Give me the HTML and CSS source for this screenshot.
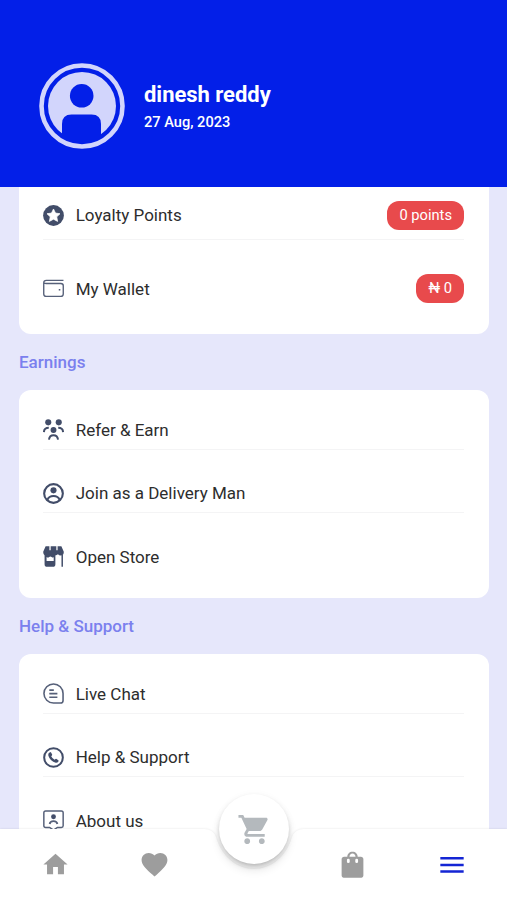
FILE: index.html
```html
<!DOCTYPE html>
<html lang="en">
<head>
<meta charset="utf-8">
<title>Menu</title>
<link rel="stylesheet" href="styles.css">
</head>
<body>
<div class="app">
  <header class="profile">
    <svg class="avatar" viewBox="0 0 86 86">
      <circle cx="43" cy="43" r="40.5" fill="none" stroke="#d2d5fc" stroke-width="4.600"/>
      <circle cx="43" cy="43" r="34" fill="#d2d5fc"/>
      <circle cx="42.700" cy="32.800" r="11.800" fill="#031fe8"/>
      <path d="M23 72V61q0-9.500 9.500-9.500h20q9.500 0 9.500 9.500v11L53 78H32z" fill="#031fe8"/>
    </svg>
    <div class="who">
      <h1 class="name">dinesh reddy</h1>
      <p class="date">27 Aug, 2023</p>
    </div>
  </header>

  <main class="content">
    <section class="card card-wallet">
      <div class="row">
        <svg class="icon" viewBox="0 0 20 20"><circle cx="10" cy="10" r="9.900" fill="#424d69"/><path d="M10 3.800l1.900 3.900 4.300.6-3.100 3 .8 4.300-3.900-2.100-3.900 2.100.8-4.300-3.100-3 4.300-.6z" fill="#fff" stroke="#fff" stroke-width=".7" stroke-linejoin="round"/></svg>
        <span class="label">Loyalty Points</span><span class="badge">0 points</span>
      </div>
      <div class="row">
        <svg class="icon" viewBox="0 0 20 20" fill="none" stroke="#566079" stroke-width="1.300"><path d="M19.500 2.200H3.200Q.700 2.200.700 4.800v10.400q0 2.300 2.300 2.300h14q2.300 0 2.300-2.300V7.300q0-2.100-2.300-2.100H3Q.700 5.200.700 4"/><path d="M15 11.200h1.500" stroke-width="1.500"/></svg>
        <span class="label">My Wallet</span><span class="badge">₦ 0</span>
      </div>
    </section>

    <h2 class="heading">Earnings</h2>
    <section class="card">
      <div class="row">
        <svg class="icon" viewBox="0 0 20 20" fill="#424d69"><circle cx="5" cy="3.200" r="2.900"/><circle cx="15" cy="3.200" r="2.900"/><circle cx="10" cy="10.500" r="2.800"/><path d="M.900 12.500Q1 8.400 5.500 8.400M19.100 12.500Q19 8.400 14.500 8.400M5.700 19.600Q6.200 15.500 10 15.500t4.300 4.100" fill="none" stroke="#424d69" stroke-width="1.900"/></svg>
        <span class="label">Refer &amp; Earn</span>
      </div>
      <div class="row">
        <svg class="icon" viewBox="0 0 20 20"><circle cx="10" cy="10" r="8.900" fill="none" stroke="#424d69" stroke-width="2"/><circle cx="10" cy="7" r="2.900" fill="#424d69"/><path d="M4.200 16Q5.500 12.300 10 12.300T15.800 16" fill="none" stroke="#424d69" stroke-width="1.900"/></svg>
        <span class="label">Join as a Delivery Man</span>
      </div>
      <div class="row">
        <svg class="icon" viewBox="0 0 20 20" fill="#424d69"><path d="M2.500.300h15l2.300 5.200q.2 3.500-2.900 3.500-1.700 0-2.600-1.200Q12.800 9 10 9H3Q.100 9 .200 5.500z"/><path d="M1.500 8h10.300v9.300q0 2.500-2.500 2.500H4q-2.500 0-2.500-2.500zM17.600 8H19v11.800h-1.400z"/><path d="M3.400 10.500q1.400 1 2.500 0t2.300 0 2 0v3.700H3.400z" fill="#fff"/><path d="M6.700 0v4M13.300 0v4" stroke="#fff" stroke-width="1.200"/></svg>
        <span class="label">Open Store</span>
      </div>
    </section>

    <h2 class="heading">Help &amp; Support</h2>
    <section class="card card-last">
      <div class="row">
        <svg class="icon" viewBox="0 0 20 20" fill="none" stroke="#566079" stroke-width="1.500"><path d="M10 .900A9.100 9.100 0 0 0 10 19.100h6.600q2.500 0 2.500-2.500V10A9.100 9.100 0 0 0 10 .900z"/><path d="M6 6.800h4.300M6 10.200h7.700M6 13.600h7.700" stroke-width="1.600"/></svg>
        <span class="label">Live Chat</span>
      </div>
      <div class="row">
        <svg class="icon" viewBox="0 0 20 20"><circle cx="10" cy="10" r="8.900" fill="none" stroke="#424d69" stroke-width="1.900"/><path d="M5.500 5.700l1.300-.8q.6-.2.900.3l1 1.900q.2.600-.2 1l-.7.700q1 2.200 3.300 3.400l.8-.7q.5-.4 1 0l1.700 1.200q.5.500.1 1-1 1.500-2.600 1.200-5-1-7-6.600-.3-1.600.4-2.600z" fill="#424d69"/></svg>
        <span class="label">Help &amp; Support</span>
      </div>
      <div class="row">
        <svg class="icon" viewBox="0 0 20 20" fill="none" stroke="#566079" stroke-width="1.400"><path d="M6.300 16.600H2.500Q.800 16.600.800 15V2.700Q.800 1 2.500 1h15q1.700 0 1.700 1.700V15q0 1.600-1.700 1.600h-3.800L10 19.200z"/><circle cx="10" cy="6.400" r="2.300" fill="#424d69" stroke="none"/><path d="M6.300 13.300Q6.800 10.600 10 10.600t3.700 2.700" stroke-width="1.700"/></svg>
        <span class="label">About us</span>
      </div>
    </section>
  </main>

  <nav class="nav">
    <svg class="nav-shape" viewBox="0 0 507 71"><path d="M0 0H204Q213 0 216 8C222 28 237 40 254 40S286 28 292 8Q295 0 304 0H507V71H0z" fill="#fff"/></svg>
    <a class="tab"><svg class="glyph" viewBox="0 0 24 24"><path d="M10 20v-6h4v6h5v-8h3L12 3 2 12h3v8z"/></svg></a>
    <a class="tab"><svg class="glyph heart" viewBox="0 0 24 24"><path d="M12 21.350l-1.450-1.320C5.400 15.360 2 12.280 2 8.500 2 5.420 4.420 3 7.500 3c1.740 0 3.410.81 4.500 2.090C13.090 3.810 14.760 3 16.500 3 19.580 3 22 5.420 22 8.500c0 3.780-3.400 6.860-8.550 11.540z"/></svg></a>
    <span class="tab gap"></span>
    <a class="tab"><svg class="glyph bag" viewBox="0 0 24 24"><path d="M19 6.400H16.300C16.300 3.900 14.500 2.200 12 2.200S7.700 3.900 7.700 6.400H5C3.900 6.400 3 7.200 3 8.300V22c0 1 .8 1.700 1.700 1.700h14.600c1 0 1.700-.7 1.700-1.700V8.300C21 7.200 20.100 6.400 19 6.400zM12 3.700c1.400 0 2.500 1.200 2.500 2.700h-5C9.500 4.900 10.600 3.700 12 3.700z"/><rect x="7.400" y="8" width="2.300" height="3.600" rx="1.100" fill="#fff"/><rect x="14.300" y="8" width="2.300" height="3.600" rx="1.100" fill="#fff"/></svg></a>
    <a class="tab active"><svg class="glyph menu" viewBox="0 0 24 24"><path d="M2 5.200h20v2.100H2zM2 10.900h20V13H2zM2 16.600h20v2.100H2z"/></svg></a>
    <a class="cart"><svg viewBox="0 0 24 24"><path d="M7 18c-1.100 0-1.990.9-1.990 2S5.900 22 7 22s2-.9 2-2-.9-2-2-2zM1 2v2h2l3.600 7.590-1.350 2.450c-.16.280-.25.610-.25.960 0 1.100.9 2 2 2h12v-2H7.420c-.14 0-.25-.11-.25-.25l.03-.12.900-1.630h7.450c.75 0 1.410-.41 1.750-1.030l3.580-6.490c.08-.14.120-.31.120-.48 0-.55-.45-1-1-1H5.210l-.94-2H1zm16 16c-1.100 0-1.990.9-1.990 2s.89 2 1.990 2 2-.9 2-2-.9-2-2-2z"/></svg></a>
  </nav>
</div>
</body>
</html>
```
FILE: styles.css
```css
* { box-sizing: border-box; }
body { margin: 0; font-family: Roboto, "Liberation Sans", sans-serif; background: #e6e7fb; }
h1, h2, p { margin: 0; }
svg { display: block; }

.app { display: flex; flex-direction: column; height: 900px; overflow: hidden; }

.profile { flex: none; height: 186.500px; padding: 63px 38px 0 39px; display: flex; gap: 19px; background: #031fe8; color: #fff; }
.avatar { width: 86px; height: 86px; }
.who { padding-top: 18px; }
.name { font-size: 22px; line-height: 28px; font-weight: 700; letter-spacing: -0.030px; }
.date { margin-top: 3px; font-size: 14.600px; line-height: 20px; font-weight: 500; }

.content { flex: none; height: 713.500px; margin-bottom: -71px; overflow: hidden; padding: 0 18px 0 19px; }
.card { background: #fff; border-radius: 12px; padding: 20px 25px 21px 24px; }
.card-last { padding-bottom: 70px; }
.row { display: flex; align-items: center; height: 63.500px; padding-top: 24.500px; border-bottom: 1px solid #f4f4f5; }
.row:first-child { height: 40px; padding-top: 1.500px; }
.row:last-child { border-bottom: 0; padding-top: 23.500px; }
.icon { width: 21px; height: 21px; margin-right: 11.700px; flex: none; }
.label { flex: 1; font-size: 17px; line-height: 24px; color: #2d2d2d; }

.card-wallet { border-radius: 0 0 12px 12px; padding-top: 5px; padding-bottom: 20px; }
.card-wallet .row:first-child { height: 48px; padding-top: 0; }
.card-wallet .row:last-child { height: 74px; padding-top: 24px; }
.badge { height: 29px; padding: 0 12px; border-radius: 12px; background: #e84a4c; color: #fff; font-size: 14.700px; line-height: 29px; }

.heading { height: 56px; font-size: 17px; line-height: 56px; font-weight: 500; color: #7b80ee; }

.nav { position: relative; flex: none; height: 71px; display: grid; grid-template-columns: repeat(5, 98.800px); justify-content: center; }
.nav-shape { position: absolute; left: 0; top: 0; width: 507px; height: 71px; filter: drop-shadow(0 0 1px rgba(0, 0, 0, .1)); }
.tab { position: relative; height: 71px; display: flex; align-items: center; justify-content: center; }
.glyph { width: 29px; height: 29px; fill: #9d9d9d; }
.heart { width: 31px; height: 31px; }
.bag { margin: 0 0 3px 1px; }
.menu { width: 28px; height: 28px; margin-left: 1px; }
.active .glyph { fill: #1425d4; }
.cart { position: absolute; left: 219px; top: -35px; width: 70px; height: 70px; border-radius: 50%; background: #fff; display: flex; align-items: center; justify-content: center; box-shadow: 0 3px 5px -1px rgba(0, 0, 0, .2), 0 6px 10px rgba(0, 0, 0, .1), 0 1px 8px rgba(0, 0, 0, .04); }
.cart svg { width: 35px; height: 35px; fill: #b4b9bd; }
```
